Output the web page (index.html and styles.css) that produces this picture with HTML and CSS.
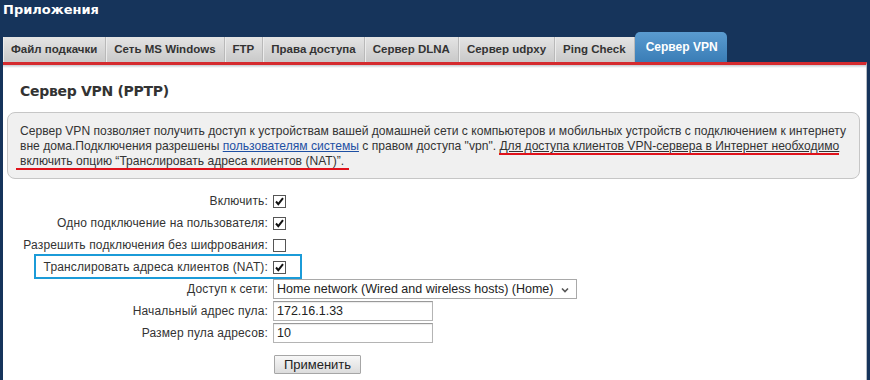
FILE: index.html
```html
<!DOCTYPE html>
<html lang="ru">
<head>
  <title>Сервер VPN</title>
  <meta charset="UTF-8">
  <link rel="stylesheet" href="styles.css">
</head>
<body>
  <div class="topbar">
    <h1>Приложения</h1>
  </div>

  <ul class="tabs">
    <li class="tab">Файл подкачки</li>
    <li class="tab">Сеть MS Windows</li>
    <li class="tab">FTP</li>
    <li class="tab">Права доступа</li>
    <li class="tab">Сервер DLNA</li>
    <li class="tab">Сервер udpxy</li>
    <li class="tab">Ping Check</li>
    <li class="tab active">Сервер VPN</li>
  </ul>

  <div class="panel">
    <h2>Сервер VPN (PPTP)</h2>

    <div class="note">
      Сервер VPN позволяет получить доступ к устройствам вашей домашней сети с компьютеров и мобильных устройств с подключением к интернету<br>
      вне дома.Подключения разрешены <a href="#">пользователям системы</a> с правом доступа "vpn". <span class="mark under">Для доступа клиентов VPN-сервера в Интернет необходимо</span><br>
      <span class="mark wide">включить опцию “Транслировать адреса клиентов (NAT)”.</span>
    </div>

    <div class="form">
      <div class="row">
        <label>Включить:</label>
        <span class="check on"><svg viewBox="0 0 11 11"><path d="M2 5.5l2.3 2.6L9 2.2"/></svg></span>
      </div>
      <div class="row">
        <label>Одно подключение на пользователя:</label>
        <span class="check on"><svg viewBox="0 0 11 11"><path d="M2 5.5l2.3 2.6L9 2.2"/></svg></span>
      </div>
      <div class="row">
        <label>Разрешить подключения без шифрования:</label>
        <span class="check"></span>
      </div>
      <div class="row">
        <span class="highlight"></span>
        <label>Транслировать адреса клиентов (NAT):</label>
        <span class="check on"><svg viewBox="0 0 11 11"><path d="M2 5.5l2.3 2.6L9 2.2"/></svg></span>
      </div>
      <div class="row">
        <label>Доступ к сети:</label>
        <div class="select">
          Home network (Wired and wireless hosts) (Home)
          <svg class="chevron" viewBox="0 0 8 6"><path d="M1 1.5l3 3 3-3"/></svg>
        </div>
      </div>
      <div class="row">
        <label>Начальный адрес пула:</label>
        <input class="field" type="text" value="172.16.1.33">
      </div>
      <div class="row">
        <label>Размер пула адресов:</label>
        <input class="field" type="text" value="10">
      </div>
      <div class="actions">
        <button class="btn">Применить</button>
      </div>
    </div>
  </div>
</body>
</html>
```

FILE: styles.css
```css
body {
  margin: 0;
  padding: 0;
  background: #16345b;
  font-family: "Liberation Sans", Arial, sans-serif;
  color: #333;
  height: 380px;
  overflow: hidden;
}
.topbar {
  height: 32px;
}
.topbar h1 {
  margin: 0;
  padding: 2px 0 0 3px;
  font-family: "DejaVu Sans", sans-serif;
  font-size: 13px;
  line-height: 16px;
  color: #fff;
}
.tabs {
  list-style: none;
  margin: 0;
  padding: 0 0 0 3px;
  height: 30px;
  display: flex;
  align-items: flex-end;
}
.tab {
  height: 25px;
  line-height: 25px;
  padding: 0 8px;
  font-size: 11.5px;
  font-weight: bold;
  color: #333;
  background: linear-gradient(#e4e4e4, #c9c9c9);
  border-right: 1px solid #b9b9b9;
  box-shadow: inset 1px 0 0 #ececec;
}
.tab.active {
  height: 30px;
  line-height: 30px;
  padding: 0 9px 0 11px;
  font-size: 12px;
  color: #fff;
  border-right: none;
  border-radius: 5px 5px 0 0;
  background: linear-gradient(#5a9bd0, #3a7db6);
  box-shadow: none;
}
.panel {
  margin: 0 3px;
  height: 315px;
  background: linear-gradient(#c5cad0, #fff 3px);
  border-top: 3px solid #d52b2f;
  border-right: 1px solid #b7bcc3;
}
.panel h2 {
  margin: 0;
  padding: 18px 0 0 17px;
  font-family: "DejaVu Sans", sans-serif;
  font-size: 14px;
  letter-spacing: -0.3px;
  line-height: 17px;
  color: #333;
}
.note {
  margin: 12px 6px 0 4px;
  padding: 11px 12px 9px 12px;
  background: #f0f0f0;
  border: 1px solid #c6c6c6;
  border-radius: 8px;
  font-size: 12.1px;
  line-height: 15px;
  color: #333;
  white-space: nowrap;
}
.note a {
  color: #1d4fa3;
}
.mark {
  border-bottom: 2px solid #e0121b;
}
.mark.under {
  text-decoration: underline;
}
.mark.wide {
  margin-left: -4px;
  padding: 0 5px 0 4px;
}
.form {
  margin-top: 11px;
}
.row {
  position: relative;
  display: flex;
  align-items: center;
  gap: 5px;
  height: 22px;
}
.row label {
  width: 265px;
  text-align: right;
  font-size: 12px;
  letter-spacing: 0.15px;
  color: #333;
}
.check {
  width: 11px;
  height: 11px;
  border: 1px solid #555;
  background: #fff;
  display: flex;
}
.check svg {
  width: 11px;
  height: 11px;
  fill: none;
  stroke: #111;
  stroke-width: 2;
}
.highlight {
  position: absolute;
  left: 31px;
  top: -2px;
  width: 268px;
  height: 25px;
  border: 2px solid #1b9bd8;
  box-sizing: border-box;
}
.select {
  position: relative;
  width: 299px;
  height: 18px;
  line-height: 18px;
  border: 1px solid #a9a9a9;
  padding-left: 3px;
  font-size: 12.5px;
  color: #222;
  background: #fff;
}
.chevron {
  position: absolute;
  right: 7px;
  top: 7px;
  width: 8px;
  height: 6px;
  fill: none;
  stroke: #555;
  stroke-width: 1.6;
}
.field {
  width: 160px;
  height: 20px;
  box-sizing: border-box;
  margin: 0;
  padding: 0 3px;
  border: 1px solid #b4b4b4;
  border-top-color: #999;
  box-shadow: inset 0 1px 1px rgba(0,0,0,0.08);
  font-family: "Liberation Sans", Arial, sans-serif;
  font-size: 12.5px;
  color: #222;
}
.actions {
  padding: 11px 0 0 271px;
}
.btn {
  width: 87px;
  height: 19px;
  padding: 0;
  border: 1px solid #a6a6a6;
  border-radius: 1px;
  background: linear-gradient(#f7f7f7, #dcdcdc);
  font-family: "Liberation Sans", Arial, sans-serif;
  font-size: 13px;
  color: #222;
}
```
